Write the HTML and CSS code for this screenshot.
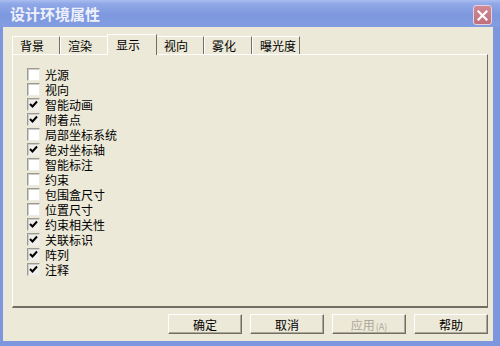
FILE: index.html
```html
<!DOCTYPE html>
<html>
  <head>
    <meta charset="utf-8"/>
    <link rel="stylesheet" href="styles.css">
  </head>
<body>

<div class="window">
  <div class="titlebar">
    <span class="title">设计环境属性</span>
    <div class="close">
      <svg width="11" height="11" viewBox="0 0 11 11"><path d="M1.5 1.5 L9.5 9.5 M9.5 1.5 L1.5 9.5" stroke="#fff" stroke-width="2.2" stroke-linecap="square"/></svg>
    </div>
  </div>

  <div class="client">
    <div class="tabs">
      <div class="tab">背景</div>
      <div class="tab">渲染</div>
      <div class="tab selected">显示</div>
      <div class="tab">视向</div>
      <div class="tab">雾化</div>
      <div class="tab">曝光度</div>
    </div>

    <div class="panel">
      <div class="check"><span class="box"></span>光源</div>
      <div class="check"><span class="box"></span>视向</div>
      <div class="check"><span class="box on"></span>智能动画</div>
      <div class="check"><span class="box on"></span>附着点</div>
      <div class="check"><span class="box"></span>局部坐标系统</div>
      <div class="check"><span class="box on"></span>绝对坐标轴</div>
      <div class="check"><span class="box"></span>智能标注</div>
      <div class="check"><span class="box"></span>约束</div>
      <div class="check"><span class="box"></span>包围盒尺寸</div>
      <div class="check"><span class="box"></span>位置尺寸</div>
      <div class="check"><span class="box on"></span>约束相关性</div>
      <div class="check"><span class="box on"></span>关联标识</div>
      <div class="check"><span class="box on"></span>阵列</div>
      <div class="check"><span class="box on"></span>注释</div>
    </div>

    <div class="buttons">
      <button class="button">确定</button>
      <button class="button">取消</button>
      <button class="button disabled">应用<span class="key">(A)</span></button>
      <button class="button">帮助</button>
    </div>
  </div>
</div>

</body>
</html>
```

FILE: styles.css
```css
* {
  box-sizing: border-box;
}

body {
  margin: 0;
  font-family: "Noto Sans CJK SC", "Liberation Sans", sans-serif;
  font-size: 12px;
  color: #000;
}

.window {
  width: 500px;
  height: 346px;
  display: flex;
  flex-direction: column;
  background-color: #7d97de;
  padding: 0 7px 5px 3px;
}

.titlebar {
  height: 27px;
  margin: 0 -7px 0 -3px;
  display: flex;
  align-items: center;
  padding: 0 8px 0 10px;
  background: linear-gradient(180deg, #aabdf0 0%, #90a8e7 14%, #7e98df 55%, #829de2 100%);
}

.title {
  flex: 1;
  color: #eef1fb;
  font-weight: bold;
  font-size: 15px;
  line-height: 27px;
}

.close {
  width: 19px;
  height: 20px;
  margin-top: 3px;
  border: 1px solid #e6d2dc;
  border-radius: 3px;
  background: linear-gradient(180deg, #d08a96, #c06f7c);
  display: flex;
  align-items: center;
  justify-content: center;
}

.client {
  flex: 1;
  background-color: #ece9d8;
  padding: 9px 5px 0 9px;
  display: flex;
  flex-direction: column;
}

.tabs {
  display: flex;
  height: 18px;
}

.tab {
  width: 48px;
  height: 18px;
  padding-left: 7px;
  line-height: 17px;
  border-top: 1px solid #fff;
  border-left: 1px solid #fff;
  border-right: 1px solid #716f64;
  background-color: #ece9d8;
}

.tab.selected {
  position: relative;
  height: 21px;
  margin: -2px -1px 0 -1px;
  width: 50px;
  padding-left: 8px;
  z-index: 1;
  line-height: 19px;
}

.panel {
  height: 254px;
  border-top: 1px solid #fff;
  border-left: 1px solid #fff;
  border-right: 1px solid #716f64;
  border-bottom: 2px solid #716f64;
  padding: 12px 0 0 14px;
}

.check {
  display: flex;
  align-items: center;
  height: 15px;
  line-height: 15px;
}

.box {
  width: 13px;
  height: 13px;
  margin-right: 5px;
  background-color: #fff;
  border-top: 1px solid #9c9a94;
  border-left: 1px solid #9c9a94;
  border-right: 1px solid #ecebe4;
  border-bottom: 1px solid #ecebe4;
  box-shadow: inset 1px 1px 0 #d0cec8;
}

.box.on {
  background: #f0efea url("data:image/svg+xml;utf8,<svg xmlns='http://www.w3.org/2000/svg' width='11' height='11'><path d='M2 5 L4.5 7.5 L9 2.5' fill='none' stroke='black' stroke-width='2'/></svg>") no-repeat center;
}

.buttons {
  display: flex;
  justify-content: flex-end;
  gap: 8px;
  margin-top: 6px;
}

.button {
  width: 74px;
  height: 20px;
  padding: 0;
  font-family: inherit;
  font-size: 12px;
  background-color: #ece9d8;
  border-top: 1px solid #fff;
  border-left: 1px solid #fff;
  border-right: 1px solid #716f64;
  border-bottom: 1px solid #716f64;
  box-shadow: inset -1px -1px 0 #aca899;
  color: #000;
}

.button.disabled {
  color: #aca899;
}

.key {
  font-size: 9px;
  margin-left: 1px;
}
```
